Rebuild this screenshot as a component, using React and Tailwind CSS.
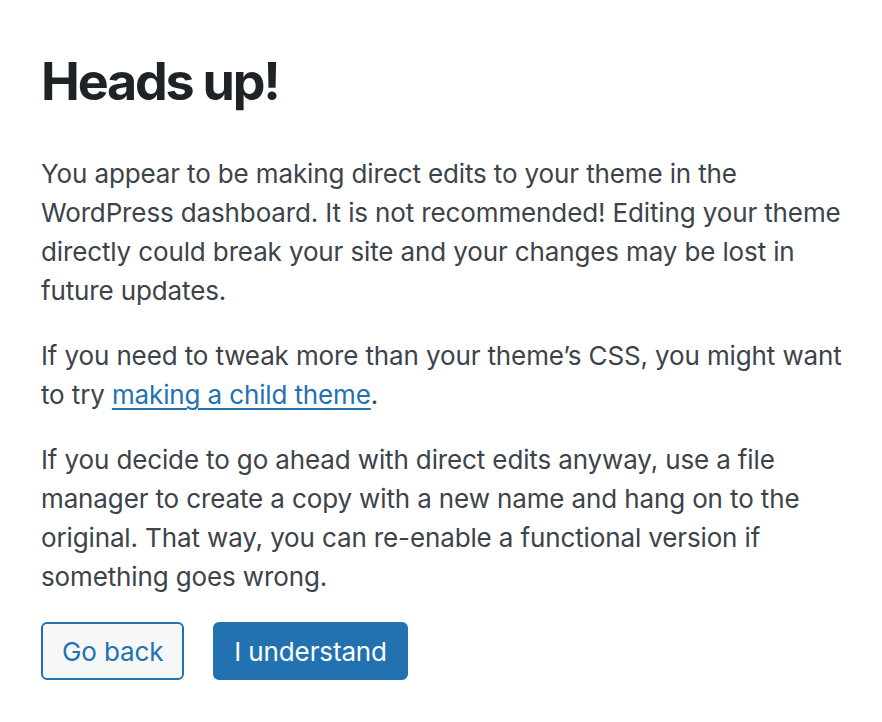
export default function App() {
  return (
    <div className="min-h-screen bg-white pl-[41px] pt-[51px] font-['Inter','Liberation_Sans',sans-serif] tracking-[-0.13px]">
      <h1 className="mb-[41px] text-[52px] font-bold leading-[1.2] tracking-[-2.2px] text-[#1d2327]">Heads up!</h1>
      <div className="w-[812px] text-[26px] leading-[39px] text-[#3c434a]">
        <p className="mb-[26px]">
          You appear to be making direct edits to your theme in the WordPress dashboard. It is not recommended! Editing
          your theme directly could break your site and your changes may be lost in future updates.
        </p>
        <p className="mb-[26px]">
          If you need to tweak more than your theme’s CSS, you might want to try{' '}
          <a href="#" className="text-[#2271b1] underline decoration-2 underline-offset-[4px]">
            making a child theme
          </a>
          .
        </p>
        <p className="mb-[26px]">
          If you decide to go ahead with direct edits anyway, use a file manager to create a copy with a new name and
          hang on to the original. That way, you can re-enable a functional version if something goes wrong.
        </p>
      </div>
      <div className="flex gap-[29px]">
        <button className="h-[58px] rounded-[6px] border-2 border-[#2271b1] bg-[#f6f7f7] px-[19px] text-[26px] text-[#2271b1]">
          Go back
        </button>
        <button className="h-[58px] rounded-[6px] border-2 border-[#2271b1] bg-[#2271b1] px-[19px] text-[26px] text-white">
          I understand
        </button>
      </div>
    </div>
  );
}
